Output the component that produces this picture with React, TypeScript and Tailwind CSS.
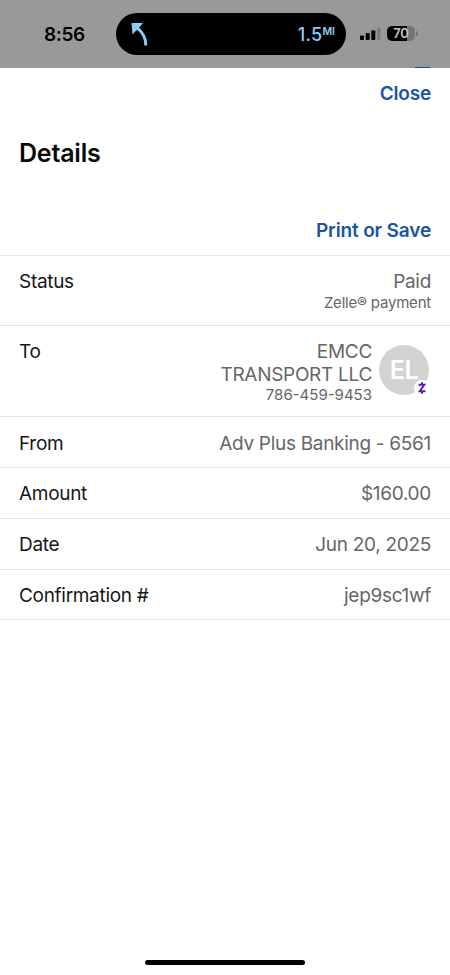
import type { ReactNode } from "react";
import { clsx } from "clsx";

type RowProps = {
  label: string;
  className?: string;
  children: ReactNode;
};

function Row({ label, className, children }: RowProps) {
  return (
    <div
      className={clsx(
        "flex items-start justify-between border-b border-[#e4e4e4] px-[19px] text-[19px] leading-[23px] tracking-[-0.3px]",
        className
      )}
    >
      <span className="text-[#161616]">{label}</span>
      <div className="text-right text-[#666]">{children}</div>
    </div>
  );
}

function StatusBar() {
  return (
    <header className="relative flex h-[68px] items-start bg-[#999] text-black">
      <span className="mt-[23px] ml-[44px] w-[72px] text-[19px] leading-6 font-semibold tracking-[-0.4px]">
        8:56
      </span>

      <div className="mt-[13px] flex h-[42px] w-[230px] items-center justify-between rounded-full bg-black pr-[11px] pl-[15px] text-[#8ccbfa]">
        <svg width="18" height="24" viewBox="0 0 18 24" fill="none">
          <path d="M.5 1H12L8.300 5.400 5 8.700 1.500 12.500Z" fill="currentColor" />
          <path d="M4.500 4.500C11 9.500 15 14.500 14.800 23.500" stroke="currentColor" strokeWidth="3" />
        </svg>
        <span className="flex items-start pt-0.5 text-[18px] leading-[22px] font-medium tracking-[0.3px]">
          1.5<span className="text-[10.5px] leading-[15px] font-semibold tracking-normal">MI</span>
        </span>
      </div>

      <svg className="mt-[26px] ml-[14px]" width="22" height="15" viewBox="0 0 22 15">
        <rect x="0" y="9.500" width="4" height="4.500" rx="1" />
        <rect x="5.700" y="7" width="4" height="7" rx="1" />
        <rect x="11.300" y="4.300" width="4" height="9.700" rx="1" />
        <rect x="17" y="1.500" width="3.500" height="12.500" rx="1" fill="#7c7c7c" />
      </svg>

      <div className="mt-[26px] ml-[5px] flex items-center gap-px">
        <div className="flex h-[15px] w-[28px] items-center justify-center rounded-[5px] bg-linear-to-r from-black from-70% to-[#747474] to-70% text-[13px] leading-[15px] font-semibold tracking-[-0.3px] text-[#c4c4c4]">
          70
        </div>
        <div className="h-[5px] w-[1.5px] rounded-r-full bg-[#777]" />
      </div>

      {/* sliver of the page behind the sheet */}
      <div className="absolute right-5 bottom-0 h-px w-[15px] bg-[#1d4f86]" />
    </header>
  );
}

function Avatar() {
  return (
    <div className="relative flex size-[50px] items-center justify-center rounded-full bg-[#d3d3d3] text-[25px] font-semibold tracking-[-0.4px] text-white">
      EL
      <div className="absolute -right-px -bottom-px flex size-4 items-center justify-center rounded-full bg-white">
        <svg width="8" height="12" viewBox="0 0 8 12" fill="none" stroke="#5f1bb0" strokeWidth="2">
          <path d="M.5 2.700H6.300L1.700 9.300H7.500M4 .2v2.500M4 9.300v2.500" />
        </svg>
      </div>
    </div>
  );
}

export default function App() {
  return (
    <div className="flex h-[975px] w-[450px] flex-col overflow-hidden bg-white font-['Inter',sans-serif]">
      <StatusBar />

      <main className="flex-1">
        <div className="flex h-[188px] flex-col border-b border-[#e9e9e9] px-[19px]">
          <button className="mt-[14px] self-end text-[19px] leading-6 font-semibold tracking-[-0.2px] text-[#1855a5]">
            Close
          </button>
          <h1 className="mt-[31px] text-[25px] leading-8 font-semibold tracking-[-0.2px] text-[#0a0a0a]">
            Details
          </h1>
          <button className="mt-[50px] self-end text-[19px] leading-6 font-semibold tracking-[-0.15px] text-[#1855a5]">
            Print or Save
          </button>
        </div>

        <Row label="Status" className="h-[70px] pt-[14px]">
          <p>Paid</p>
          <p className="text-[15px] leading-5 tracking-[-0.2px]">Zelle® payment</p>
        </Row>
        <Row label="To" className="h-[91px] pt-[14px]">
          <div className="flex gap-[7px] pr-0.5">
            <div>
              <p>EMCC</p>
              <p>TRANSPORT LLC</p>
              <p className="text-[15px] leading-[18px] tracking-normal">786-459-9453</p>
            </div>
            <div className="pt-[5px]">
              <Avatar />
            </div>
          </div>
        </Row>
        <Row label="From" className="h-[51px] pt-[15px]">Adv Plus Banking - 6561</Row>
        <Row label="Amount" className="h-[51px] pt-[14px]">$160.00</Row>
        <Row label="Date" className="h-[51px] pt-[14px]">Jun 20, 2025</Row>
        <Row label="Confirmation #" className="h-[50px] pt-[14px]">jep9sc1wf</Row>
      </main>

      <footer className="flex h-[15px] justify-center">
        <div className="h-[5px] w-40 rounded-full bg-black" />
      </footer>
    </div>
  );
}
